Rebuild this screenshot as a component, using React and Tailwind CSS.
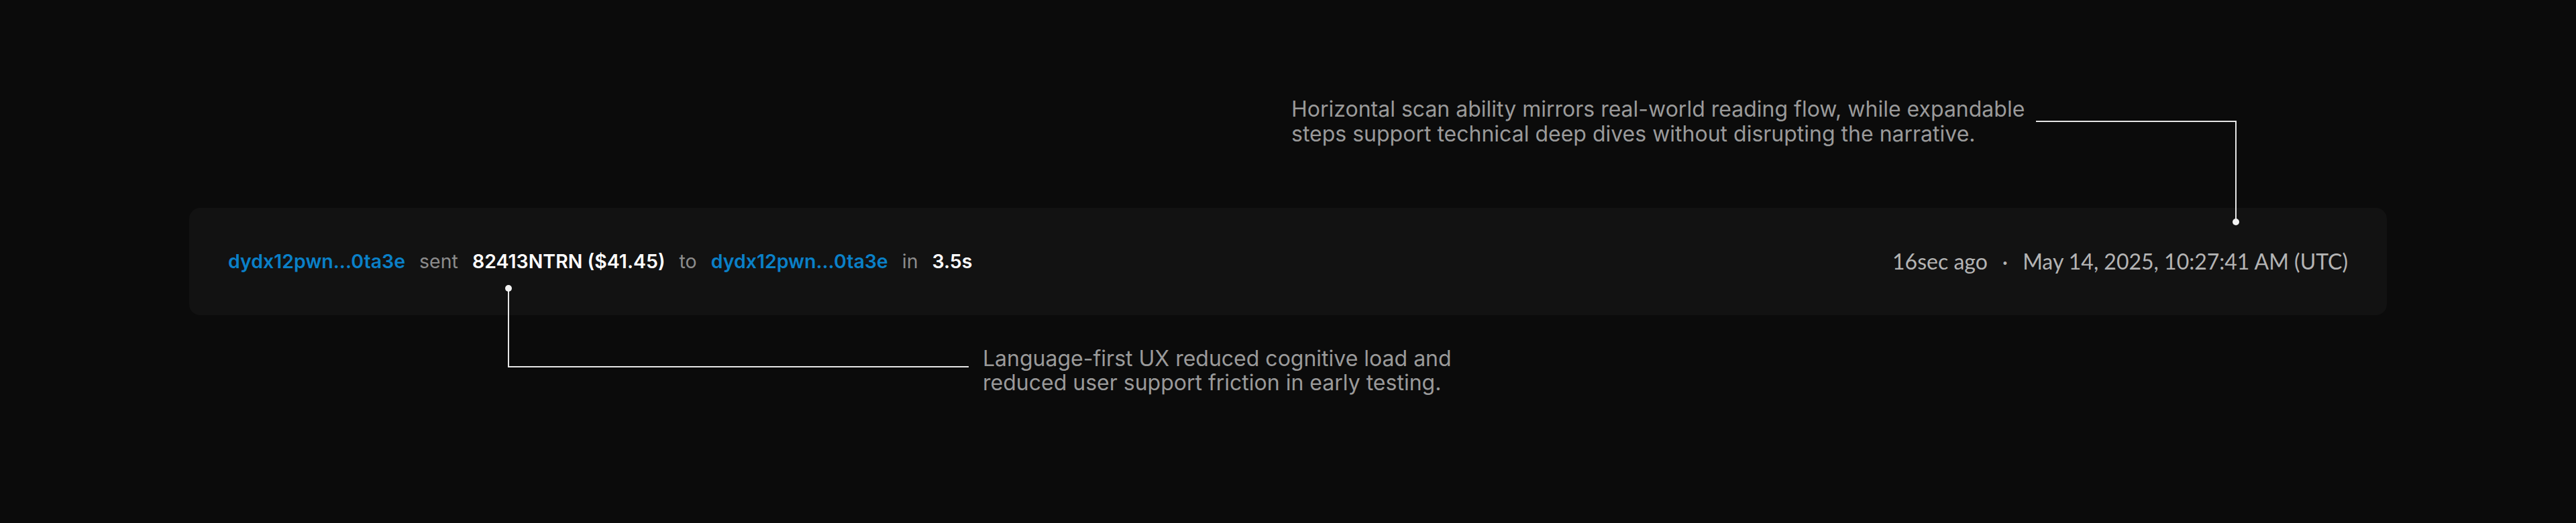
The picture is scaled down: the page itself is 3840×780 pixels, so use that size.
import React from 'react';

const Dot = ({ className }) => (
    <div className={`absolute w-[10px] h-[10px] rounded-full bg-[#f2f2f2] ${className}`} />
);

const App = () => {
    return (
        <div className="relative w-[3840px] h-[780px] bg-[#0b0b0b] overflow-hidden">
            {/* Transaction card */}
            <div className="mt-[310px] mx-[282px] h-[160px] rounded-2xl bg-[#121212] px-[58px] flex items-center justify-between">
                <div className="flex items-center gap-[21px] text-[28.5px] font-['Inter',sans-serif] whitespace-nowrap">
                    <span className="font-semibold text-[#0a80c8]">dydx12pwn...0ta3e</span>
                    <span className="text-[#8c8c8c]">sent</span>
                    <span className="font-semibold text-white">82413NTRN ($41.45)</span>
                    <span className="text-[#8c8c8c]">to</span>
                    <span className="font-semibold text-[#0a80c8]">dydx12pwn...0ta3e</span>
                    <span className="text-[#8c8c8c]">in</span>
                    <span className="font-semibold text-white">3.5s</span>
                </div>
                <div className="flex items-center gap-[22px] text-[32px] text-[#b4b4b4] font-['Lato',sans-serif] whitespace-nowrap">
                    <span>16sec ago</span>
                    <span>·</span>
                    <span>May 14, 2025, 10:27:41 AM (UTC)</span>
                </div>
            </div>

            {/* Annotation: top */}
            <p className="absolute left-[1925px] top-[144px] text-[32px] leading-[37px] text-[#9a9a9a] font-['Inter',sans-serif] whitespace-nowrap">
                Horizontal scan ability mirrors real-world reading flow, while expandable
                <br />
                steps support technical deep dives without disrupting the narrative.
            </p>
            <div className="absolute left-[3035px] top-[180px] w-[299px] h-[2px] bg-[#e6e6e6]" />
            <div className="absolute left-[3332px] top-[180px] w-[2px] h-[151px] bg-[#e6e6e6]" />
            <Dot className="left-[3328px] top-[326px]" />

            {/* Annotation: bottom */}
            <div className="absolute left-[757px] top-[430px] w-[2px] h-[118px] bg-[#e6e6e6]" />
            <div className="absolute left-[757px] top-[546px] w-[687px] h-[2px] bg-[#e6e6e6]" />
            <Dot className="left-[753px] top-[425px]" />
            <p className="absolute left-[1465px] top-[517px] text-[32px] leading-[36px] text-[#9a9a9a] font-['Inter',sans-serif] whitespace-nowrap">
                Language-first UX reduced cognitive load and
                <br />
                reduced user support friction in early testing.
            </p>
        </div>
    );
};

export default App;
